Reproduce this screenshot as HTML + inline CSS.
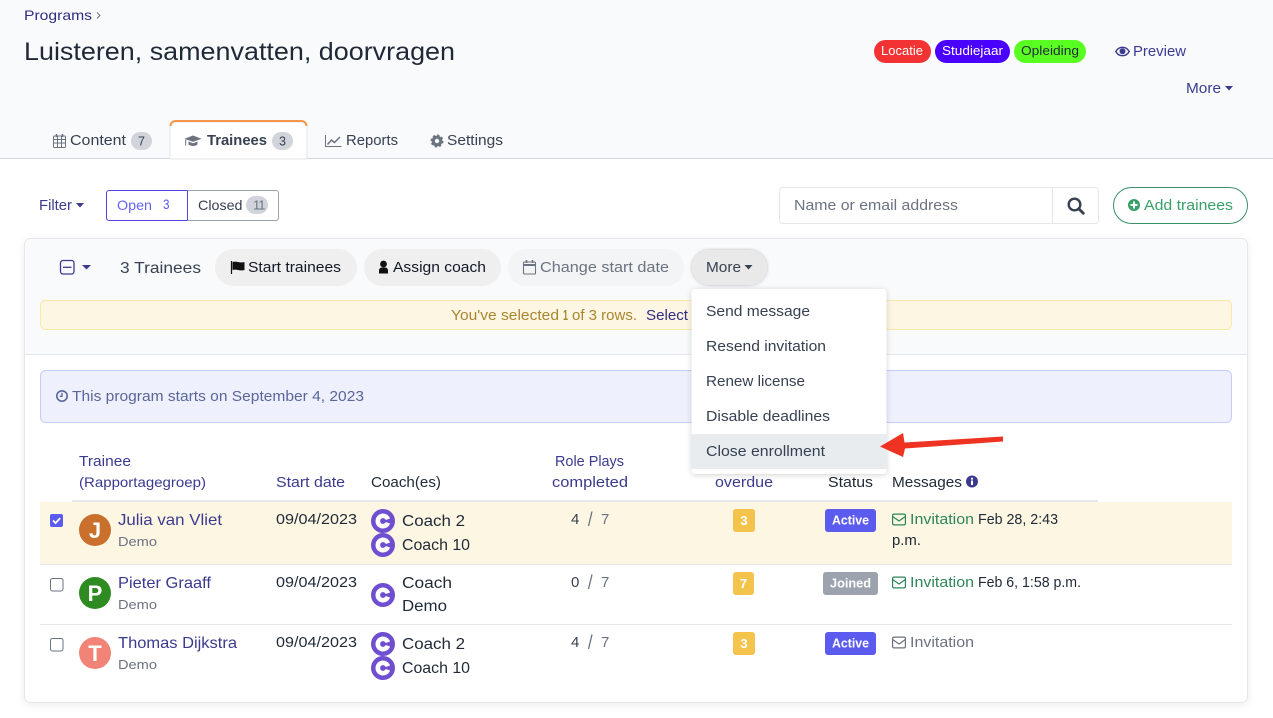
<!DOCTYPE html>
<html lang="en">
<head>
<meta charset="utf-8">
<title>Luisteren, samenvatten, doorvragen</title>
<style>
html,body{margin:0;padding:0;background:#fff;width:1273px;height:718px;overflow:hidden}
svg{display:block}
text{font-family:"Liberation Sans",sans-serif;font-size:14.8px;fill:#1f2937}
.l{fill:#3b3a8f}
.g{fill:#6b7280}
.d{fill:#374151}
.t{fill:#1f2937}
</style>
</head>
<body>
<svg width="1273" height="718" viewBox="0 0 1273 718" xmlns="http://www.w3.org/2000/svg">
<defs>
<filter id="sh" x="-10%" y="-10%" width="120%" height="120%"><feDropShadow dx="0" dy="1" stdDeviation="3" flood-color="#000" flood-opacity=".18"/></filter>
<filter id="sh2" x="-5%" y="-5%" width="110%" height="110%"><feDropShadow dx="0" dy="2" stdDeviation="4" flood-color="#000" flood-opacity=".07"/></filter>
<filter id="ring" x="-10%" y="-20%" width="120%" height="140%"><feDropShadow dx="0" dy="0" stdDeviation="1.5" flood-color="#000" flood-opacity=".28"/></filter>
<g id="coach"><circle r="12" fill="#6f4fd0"/><path d="M4.9 -1.7A5.2 5.2 0 1 0 4.9 1.7" fill="none" stroke="#fff" stroke-width="4.6"/></g>
<g id="mail" fill="none"><rect x=".6" y="1.1" width="12.8" height="10.8" rx="1.4" stroke-width="1.2"/><path d="M.8 3.6 7 8l6.2-4.4" stroke-width="1.2"/></g>
</defs>

<!-- Page header -->
<rect width="1273" height="158" fill="#f9fafc"/>
<rect y="158" width="1273" height="1" fill="#d1d5db"/>
<text class="l" x="24" y="20" textLength="68" lengthAdjust="spacingAndGlyphs" style="font-size:14px;fill:#312e81">Programs</text>
<path d="M97 12.5l3 3-3 3" fill="none" stroke="#6b7280" stroke-width="1"/>
<text x="24" y="60" textLength="431" lengthAdjust="spacingAndGlyphs" style="font-size:25px;fill:#1f2937">Luisteren, samenvatten, doorvragen</text>

<rect x="874" y="40" width="57" height="23" rx="11.5" fill="#f33333"/>
<text x="881" y="55" textLength="42" lengthAdjust="spacingAndGlyphs" style="font-size:13px;fill:#fff">Locatie</text>
<rect x="935" y="40" width="75" height="23" rx="11.5" fill="#4a00ff"/>
<text x="942" y="55" textLength="61" lengthAdjust="spacingAndGlyphs" style="font-size:13px;fill:#fff">Studiejaar</text>
<rect x="1014" y="40" width="72" height="23" rx="11.5" fill="#5aff22"/>
<text x="1021" y="55" textLength="58" lengthAdjust="spacingAndGlyphs" style="font-size:13px;fill:#1f2937">Opleiding</text>

<path d="M1115.8 51.5c3-5.6 10.4-5.6 13.4 0c-3 5.6-10.4 5.6-13.4 0z" fill="none" stroke="#3b3a8f" stroke-width="1.4"/><circle cx="1122.5" cy="51.3" r="3" fill="#3b3a8f"/>
<text class="l" x="1133" y="56" textLength="53" lengthAdjust="spacingAndGlyphs">Preview</text>
<text class="l" x="1186" y="93" textLength="35" lengthAdjust="spacingAndGlyphs">More</text>
<path d="M1225 86h8l-4 4.5z" fill="#3b3a8f"/>

<!-- Tabs -->
<path d="M170 159V127a5 5 0 0 1 5-5H302a5 5 0 0 1 5 5V159z" fill="#fff" stroke="#e2e4e8" stroke-width="1"/>
<path d="M170.5 126a5 5 0 0 1 5-5H301.5a5 5 0 0 1 5 5" fill="none" stroke="#f4954a" stroke-width="2"/>

<g fill="none" stroke="#6b7280" stroke-width="1"><rect x="53.5" y="136" width="12" height="11.5" rx="1"/><path d="M53.5 139.5h12M53.5 143h12M57.5 136v11.5M61.5 136v11.5"/><path d="M56.5 134v3M62.5 134v3" stroke-width="1.6"/></g>
<text class="d" x="70" y="145" textLength="56" lengthAdjust="spacingAndGlyphs">Content</text>
<rect x="131" y="132" width="21" height="18" rx="9" fill="#d1d5db"/>
<text class="d" x="138" y="145.5" textLength="7" lengthAdjust="spacingAndGlyphs" style="font-size:13px">7</text>

<path d="M193 135.5l8.5 3.2-8.5 3.2-8.5-3.2z" fill="#6b7280"/><path d="M188.5 141.5v3c2.5 2 6.5 2 9 0v-3l-4.5 1.7z" fill="#6b7280"/><path d="M185.7 139.5v6" stroke="#6b7280" stroke-width="1"/>
<text x="207" y="145" textLength="60" lengthAdjust="spacingAndGlyphs" style="font-weight:700;fill:#374151">Trainees</text>
<rect x="272" y="132" width="21" height="18" rx="9" fill="#d1d5db"/>
<text class="d" x="279" y="145.5" textLength="7" lengthAdjust="spacingAndGlyphs" style="font-size:13px">3</text>

<path d="M325.5 135v11.5h16" fill="none" stroke="#6b7280" stroke-width="1"/><path d="M327.5 144.5l4-4.5 3 2.5 5.5-5.5" fill="none" stroke="#6b7280" stroke-width="1.5"/>
<text class="d" x="346" y="145" textLength="52" lengthAdjust="spacingAndGlyphs">Reports</text>

<circle cx="437" cy="141" r="3.8" fill="none" stroke="#6b7280" stroke-width="3.2"/><circle cx="437" cy="141" r="5.8" fill="none" stroke="#6b7280" stroke-width="1.4" stroke-dasharray="2.3 2.25"/>
<text class="d" x="447" y="145" textLength="56" lengthAdjust="spacingAndGlyphs">Settings</text>

<!-- Toolbar -->
<text class="l" x="39" y="210" textLength="33" lengthAdjust="spacingAndGlyphs">Filter</text>
<path d="M76 203h8l-4 4.5z" fill="#3b3a8f"/>

<path d="M187.5 220.5H109a2.5 2.5 0 0 1-2.5-2.5V193a2.5 2.5 0 0 1 2.5-2.5H187.5z" fill="#fff" stroke="#4f46e5"/>
<path d="M187.5 190.5H276a2.5 2.5 0 0 1 2.5 2.5V218a2.5 2.5 0 0 1-2.5 2.5H187.5z" fill="#fff" stroke="#9ca3af"/>
<path d="M187.5 190.5v30" stroke="#4f46e5"/>
<text x="117" y="210" textLength="35" lengthAdjust="spacingAndGlyphs" style="font-size:14px;fill:#6366f1">Open</text>
<text x="163" y="209" textLength="6.5" lengthAdjust="spacingAndGlyphs" style="font-size:13.5px;fill:#5b55e8">3</text>
<text class="d" x="198" y="210" textLength="44.5" lengthAdjust="spacingAndGlyphs" style="font-size:14px">Closed</text>
<rect x="246" y="196" width="22" height="18" rx="9" fill="#d1d5db"/>
<text class="g" x="253" y="209.5" style="font-size:13px;letter-spacing:-1px">11</text>

<rect x="779.5" y="187.5" width="319" height="36" rx="3" fill="#fff" stroke="#e5e7eb"/>
<path d="M1052.5 188v35" stroke="#e5e7eb"/>
<text class="g" x="794" y="210" textLength="164" lengthAdjust="spacingAndGlyphs">Name or email address</text>
<circle cx="1074.5" cy="204.5" r="5.8" fill="none" stroke="#374151" stroke-width="2.4"/><path d="M1079 209l4.3 4.3" stroke="#374151" stroke-width="2.8" stroke-linecap="round"/>

<rect x="1113.5" y="187.5" width="134" height="36" rx="18" fill="#fff" stroke="#3d8f66"/>
<circle cx="1134" cy="205" r="6" fill="#38a169"/><path d="M1130.5 205h7M1134 201.5v7" stroke="#fff" stroke-width="2"/>
<text x="1144" y="210" textLength="89" lengthAdjust="spacingAndGlyphs" style="fill:#38a169">Add trainees</text>

<!-- Panel -->
<rect x="24.5" y="238.5" width="1223" height="464" rx="6" fill="#fff" stroke="#e5e7eb" filter="url(#sh2)"/>
<path d="M25 354V244.5a5.5 5.5 0 0 1 5.5-5.500H1241.5a5.5 5.5 0 0 1 5.5 5.5V354z" fill="#f9fafc"/>
<rect x="25" y="354" width="1222" height="1" fill="#e5e7eb"/>

<rect x="60.5" y="260.5" width="13.5" height="13.5" rx="2.5" fill="none" stroke="#3b3a8f" stroke-width="1.3"/><path d="M63 267.3h8.5" stroke="#3b3a8f" stroke-width="1.3"/>
<path d="M82 265h9l-4.5 4.5z" fill="#3b3a8f"/>
<text class="d" x="120" y="273" textLength="81" lengthAdjust="spacingAndGlyphs" style="font-size:16px">3 Trainees</text>

<rect x="215" y="249" width="142" height="37" rx="18.5" fill="#efefef"/>
<path d="M231.5 261v13" stroke="#111" stroke-width="1.2"/><path d="M232.5 262c4-1.5 7 1.5 12 0v8c-5 1.5-8-1.5-12 0z" fill="#111"/>
<text class="t" x="248" y="272" textLength="93" lengthAdjust="spacingAndGlyphs" style="fill:#111827">Start trainees</text>

<rect x="364" y="249" width="137" height="37" rx="18.5" fill="#efefef"/>
<circle cx="383.5" cy="264" r="3.4" fill="#111"/><path d="M379 273.5v-3c0-2 1.5-3 3-3h3c1.5 0 3 1 3 3v3z" fill="#111"/>
<text x="393" y="272" textLength="93" lengthAdjust="spacingAndGlyphs" style="fill:#111827">Assign coach</text>

<rect x="508" y="249" width="176" height="37" rx="18.5" fill="#f3f4f5"/>
<g fill="none" stroke="#6b7280" stroke-width="1.1"><rect x="523.5" y="262" width="12" height="12" rx="1"/><path d="M523.5 265h12" stroke-width="2"/><path d="M526.5 260v3M532.5 260v3" stroke-width="1.6"/></g>
<text class="g" x="540" y="272" textLength="129" lengthAdjust="spacingAndGlyphs">Change start date</text>

<rect x="692" y="250" width="75" height="35" rx="17.5" fill="#e9e9e9" filter="url(#ring)"/>
<text class="d" x="706" y="272" textLength="35" lengthAdjust="spacingAndGlyphs">More</text>
<path d="M744.5 265h8l-4 4.5z" fill="#374151"/>

<rect x="40.5" y="300.5" width="1191" height="29" rx="5" fill="#fdf6e3" stroke="#fae8a8"/>
<text x="451" y="320" textLength="108" lengthAdjust="spacingAndGlyphs" style="fill:#a8862f">You've selected</text>
<text x="563" y="320" textLength="5" lengthAdjust="spacingAndGlyphs" style="font-weight:700;fill:#a8862f">1</text>
<text x="572" y="320" textLength="65" lengthAdjust="spacingAndGlyphs" style="fill:#a8862f">of 3 rows.</text>
<text class="l" x="646" y="320" textLength="42" lengthAdjust="spacingAndGlyphs" style="fill:#312e81">Select</text>

<rect x="40.5" y="370.5" width="1191" height="52" rx="5" fill="#eef0fd" stroke="#c7cdfb"/>
<circle cx="62" cy="396" r="5.2" fill="none" stroke="#5b6699" stroke-width="1.6"/><path d="M62 392.800v3.500h-2.300" fill="none" stroke="#5b6699" stroke-width="1.3"/>
<text x="72" y="401" textLength="292" lengthAdjust="spacingAndGlyphs" style="fill:#5b6699">This program starts on September 4, 2023</text>

<!-- Table header -->
<text class="l" x="79" y="466" textLength="52" lengthAdjust="spacingAndGlyphs">Trainee</text>
<text class="l" x="79" y="487" textLength="127" lengthAdjust="spacingAndGlyphs" style="font-size:14px">(Rapportagegroep)</text>
<text class="l" x="276" y="487" textLength="69" lengthAdjust="spacingAndGlyphs">Start date</text>
<text class="t" x="371" y="487" textLength="70" lengthAdjust="spacingAndGlyphs">Coach(es)</text>
<text class="l" x="555" y="466" textLength="69" lengthAdjust="spacingAndGlyphs">Role Plays</text>
<text class="l" x="552" y="487" textLength="76" lengthAdjust="spacingAndGlyphs">completed</text>
<text class="l" x="715" y="487" textLength="58" lengthAdjust="spacingAndGlyphs">overdue</text>
<text class="t" x="828" y="487" textLength="45" lengthAdjust="spacingAndGlyphs">Status</text>
<text class="t" x="892" y="487" textLength="70" lengthAdjust="spacingAndGlyphs">Messages</text>
<circle cx="972" cy="481.5" r="6" fill="#3b3a8f"/><rect x="971" y="480.5" width="2" height="4.5" fill="#fff"/><rect x="971" y="477.8" width="2" height="1.8" fill="#fff"/>
<rect x="72" y="500" width="1026" height="2" fill="#e5e7eb"/>

<!-- Rows -->
<rect x="40" y="502" width="1192" height="62" fill="#fdf6e3"/>
<rect x="40" y="564" width="1192" height="1" fill="#e5e7eb"/>
<rect x="40" y="624" width="1192" height="1" fill="#e5e7eb"/>

<rect x="50" y="514" width="13" height="13" rx="2" fill="#5b5bef"/><path d="M53 520.5l2.6 2.6 4.5-5" fill="none" stroke="#fff" stroke-width="1.8"/>
<rect x="50.5" y="578.5" width="12.5" height="12.5" rx="2" fill="#fff" stroke="#6b7280"/>
<rect x="50.5" y="638.5" width="12.5" height="12.5" rx="2" fill="#fff" stroke="#6b7280"/>

<circle cx="95" cy="530" r="16" fill="#c8702c"/>
<text x="95" y="538" text-anchor="middle" style="font-size:22px;font-weight:700;fill:#fff">J</text>
<circle cx="95" cy="593" r="16" fill="#2e8b22"/>
<text x="95" y="601" text-anchor="middle" style="font-size:22px;font-weight:700;fill:#fff">P</text>
<circle cx="95" cy="653" r="16" fill="#f28477"/>
<text x="95" y="661" text-anchor="middle" style="font-size:22px;font-weight:700;fill:#fff">T</text>

<text class="l" x="118" y="525" textLength="104" lengthAdjust="spacingAndGlyphs" style="font-size:16px">Julia van Vliet</text>
<text class="g" x="118" y="546" textLength="39" lengthAdjust="spacingAndGlyphs" style="font-size:13px">Demo</text>
<text class="l" x="118" y="588" textLength="93" lengthAdjust="spacingAndGlyphs" style="font-size:16px">Pieter Graaff</text>
<text class="g" x="118" y="609" textLength="39" lengthAdjust="spacingAndGlyphs" style="font-size:13px">Demo</text>
<text class="l" x="118" y="648" textLength="119" lengthAdjust="spacingAndGlyphs" style="font-size:16px">Thomas Dijkstra</text>
<text class="g" x="118" y="669" textLength="39" lengthAdjust="spacingAndGlyphs" style="font-size:13px">Demo</text>

<text class="t" x="276" y="524" textLength="81" lengthAdjust="spacingAndGlyphs">09/04/2023</text>
<text class="t" x="276" y="587" textLength="81" lengthAdjust="spacingAndGlyphs">09/04/2023</text>
<text class="t" x="276" y="647" textLength="81" lengthAdjust="spacingAndGlyphs">09/04/2023</text>

<use href="#coach" x="383" y="521"/><use href="#coach" x="383" y="545"/>
<use href="#coach" x="383" y="595"/>
<use href="#coach" x="383" y="644"/><use href="#coach" x="383" y="668"/>
<text class="t" x="402" y="526" textLength="63" lengthAdjust="spacingAndGlyphs" style="font-size:15.5px">Coach 2</text>
<text class="t" x="402" y="550" textLength="68" lengthAdjust="spacingAndGlyphs" style="font-size:15.5px">Coach 10</text>
<text class="t" x="402" y="588" textLength="50" lengthAdjust="spacingAndGlyphs" style="font-size:15.5px">Coach</text>
<text class="t" x="402" y="611" textLength="45" lengthAdjust="spacingAndGlyphs" style="font-size:15.5px">Demo</text>
<text class="t" x="402" y="649" textLength="63" lengthAdjust="spacingAndGlyphs" style="font-size:15.5px">Coach 2</text>
<text class="t" x="402" y="673" textLength="68" lengthAdjust="spacingAndGlyphs" style="font-size:15.5px">Coach 10</text>

<text class="d" x="571" y="524" style="font-size:15px">4</text>
<path d="M592 511.5 588.5 526" stroke="#6b7280" stroke-width="1.3"/>
<text class="g" x="601" y="524" style="font-size:15px">7</text>
<text class="d" x="571" y="587" style="font-size:15px">0</text>
<path d="M592 574.5 588.5 589" stroke="#6b7280" stroke-width="1.3"/>
<text class="g" x="601" y="587" style="font-size:15px">7</text>
<text class="d" x="571" y="647" style="font-size:15px">4</text>
<path d="M592 634.5 588.5 649" stroke="#6b7280" stroke-width="1.3"/>
<text class="g" x="601" y="647" style="font-size:15px">7</text>

<rect x="733" y="509" width="22" height="23" rx="3" fill="#f3c34c"/>
<text x="744" y="525" text-anchor="middle" style="font-size:13px;font-weight:700;fill:#fff">3</text>
<rect x="733" y="572" width="21" height="23" rx="3" fill="#f3c34c"/>
<text x="743.5" y="588" text-anchor="middle" style="font-size:13px;font-weight:700;fill:#fff">7</text>
<rect x="733" y="632" width="22" height="23" rx="3" fill="#f3c34c"/>
<text x="744" y="648" text-anchor="middle" style="font-size:13px;font-weight:700;fill:#fff">3</text>

<rect x="825" y="509" width="51" height="23" rx="3" fill="#5b5bef"/>
<text x="832" y="524.5" textLength="37" lengthAdjust="spacingAndGlyphs" style="font-size:13px;font-weight:700;fill:#fff">Active</text>
<rect x="823" y="572" width="55" height="23" rx="3" fill="#9ca3af"/>
<text x="830" y="587.5" textLength="41" lengthAdjust="spacingAndGlyphs" style="font-size:13px;font-weight:700;fill:#fff">Joined</text>
<rect x="825" y="632" width="51" height="23" rx="3" fill="#5b5bef"/>
<text x="832" y="647.5" textLength="37" lengthAdjust="spacingAndGlyphs" style="font-size:13px;font-weight:700;fill:#fff">Active</text>

<use href="#mail" x="892" y="513" stroke="#2f855a"/>
<text x="910" y="524" textLength="64" lengthAdjust="spacingAndGlyphs" style="fill:#2f855a">Invitation</text>
<text class="t" x="978" y="524" textLength="80" lengthAdjust="spacingAndGlyphs">Feb 28, 2:43</text>
<text class="t" x="892" y="545" textLength="29" lengthAdjust="spacingAndGlyphs">p.m.</text>
<use href="#mail" x="892" y="576" stroke="#2f855a"/>
<text x="910" y="587" textLength="64" lengthAdjust="spacingAndGlyphs" style="fill:#2f855a">Invitation</text>
<text class="t" x="978" y="587" textLength="103" lengthAdjust="spacingAndGlyphs">Feb 6, 1:58 p.m.</text>
<use href="#mail" x="892" y="636" stroke="#6b7280"/>
<text class="g" x="910" y="647" textLength="64" lengthAdjust="spacingAndGlyphs">Invitation</text>

<!-- Dropdown -->
<rect x="691.5" y="289" width="195" height="185" rx="4" fill="#fff" filter="url(#sh)"/>
<rect x="691.5" y="434" width="195" height="35" fill="#e9ecef"/>
<text class="d" x="706" y="316" textLength="104" lengthAdjust="spacingAndGlyphs">Send message</text>
<text class="d" x="706" y="351" textLength="120" lengthAdjust="spacingAndGlyphs">Resend invitation</text>
<text class="d" x="706" y="386" textLength="99" lengthAdjust="spacingAndGlyphs">Renew license</text>
<text class="d" x="706" y="421" textLength="124" lengthAdjust="spacingAndGlyphs">Disable deadlines</text>
<text class="d" x="706" y="456" textLength="119" lengthAdjust="spacingAndGlyphs">Close enrollment</text>

<!-- Arrow -->
<path d="M880 446.5 903 433 904.5 442.500 1003 436.500 1003 441.500 905 448.500 903 457z" fill="#ee3322"/>
</svg>
</body>
</html>
